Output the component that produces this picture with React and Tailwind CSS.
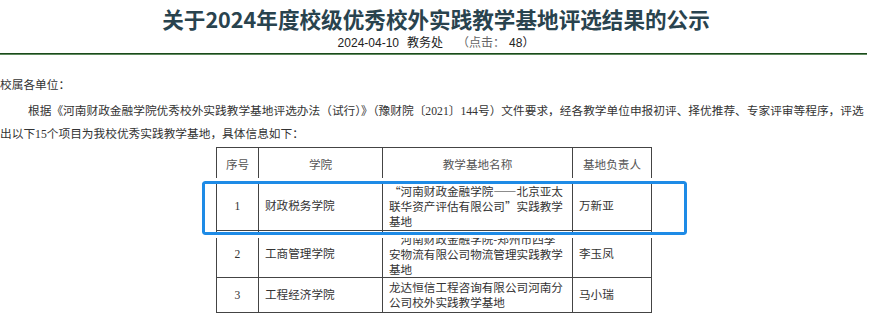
const rows = [
  {
    no: "1",
    college: "财政税务学院",
    name: "“河南财政金融学院——北京亚太联华资产评估有限公司”实践教学基地",
    head: "万新亚",
    h: "h-[48px]",
  },
  {
    no: "2",
    college: "工商管理学院",
    name: "“河南财政金融学院-郑州市四季安物流有限公司物流管理实践教学基地",
    head: "李玉凤",
    h: "h-[47px]",
  },
  {
    no: "3",
    college: "工程经济学院",
    name: "龙达恒信工程咨询有限公司河南分公司校外实践教学基地",
    head: "马小瑞",
    h: "h-[35px]",
  },
];

export default function App() {
  return (
    <div className="relative w-[872px] h-[314px] overflow-hidden bg-white">
      {/* Title */}
      <div className="text-center pt-[4px]">
        <h1 className="text-[21.6px] leading-[30px] font-bold text-[#29434e] [font-family:'Noto_Sans_CJK_SC',sans-serif]">
          关于2024年度校级优秀校外实践教学基地评选结果的公示
        </h1>
        <div className="text-[12px] leading-[18px] text-[#222] [font-family:'Liberation_Sans','Noto_Sans_CJK_SC',sans-serif]">
          <span>2024-04-10</span>
          <span className="ml-[8px]">教务处</span>
          <span className="ml-[14px] text-[#666]">（点击：</span>
          <span className="ml-[4px]">48）</span>
        </div>
      </div>
      <div className="mt-[1px] w-[867px] h-[2px] bg-[#1b4a1b] border-b border-[#5f8a5f]" />

      {/* Body */}
      <div lang="zh-CN" className="text-[11.7px] text-[#333] [font-family:'Liberation_Serif','Noto_Sans_CJK_SC',serif]">
        <p className="mt-[19px] leading-[24px]">校属各单位：</p>
        <p className="mt-[2px] leading-[23px] whitespace-nowrap">
          <span className="pl-[28px]">
            根据《河南财政金融学院优秀校外实践教学基地评选办法（试行）》（豫财院〔2021〕144号）文件要求，经各教学单位申报初评、择优推荐、专家评审等程序，评选
          </span>
          <br />
          出以下15个项目为我校优秀实践教学基地，具体信息如下：
        </p>

        <table className="mt-[1px] ml-[216px] border-collapse text-[11.6px] leading-[15px]">
          <thead>
            <tr className="h-[35px] text-[#555]">
              <th className="w-[42px] border border-[#444] font-normal text-center">序号</th>
              <th className="w-[124px] border border-[#444] font-normal text-center">学院</th>
              <th className="w-[190px] border border-[#444] font-normal text-center">教学基地名称</th>
              <th className="w-[79px] border border-[#444] font-normal text-center">基地负责人</th>
            </tr>
          </thead>
          <tbody>
            {rows.map((r) => (
              <tr key={r.no} className={r.h}>
                <td className="border border-[#444] text-center">{r.no}</td>
                <td className="border border-[#444] px-[6px]">{r.college}</td>
                <td className="border border-[#444] px-[6px] [font-family:'Noto_Sans_CJK_SC',serif]">
                  {r.name}
                </td>
                <td className="border border-[#444] px-[6px]">{r.head}</td>
              </tr>
            ))}
          </tbody>
        </table>
      </div>

      {/* Highlight box */}
      <div className="absolute left-[202px] top-[181px] w-[485px] h-[54px] rounded-[3px] border-[3px] border-[#1e8be6] outline-[3px] outline-white" />
    </div>
  );
}
